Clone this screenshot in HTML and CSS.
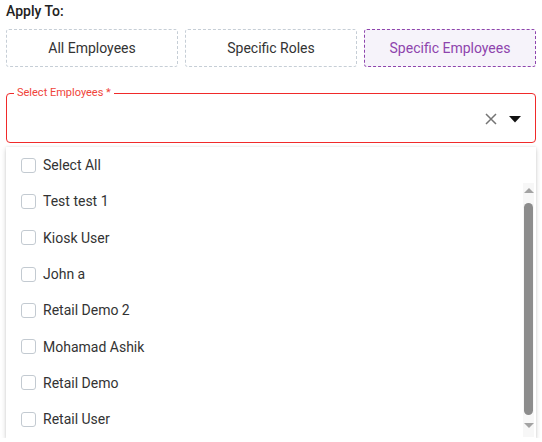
FILE: index.html
```html
<!DOCTYPE html>
<html>
<head>
<meta charset="utf-8">
<link rel="stylesheet" href="styles.css">
</head>
<body>
<div class="wrap">
  <div class="title">Apply To:</div>
  <div class="options">
    <div class="opt">All Employees</div>
    <div class="opt">Specific Roles</div>
    <div class="opt active">Specific Employees</div>
  </div>
  <fieldset class="field">
    <legend class="legend">Select Employees *</legend>
    <div class="field-icons">
      <svg class="clear" width="12" height="12" viewBox="0 0 12 12"><path d="M1 1L11 11M11 1L1 11" stroke="#757575" stroke-width="1.5" fill="none"/></svg>
      <svg class="caret" width="12" height="7" viewBox="0 0 12 7"><path d="M0 0H12L6 6.5Z" fill="#111"/></svg>
    </div>
  </fieldset>
  <div class="menu">
    <div class="row"><span class="cb"></span>Select All</div>
    <div class="list">
      <div class="row"><span class="cb"></span>Test test 1</div>
      <div class="row"><span class="cb"></span>Kiosk User</div>
      <div class="row"><span class="cb"></span>John a</div>
      <div class="row"><span class="cb"></span>Retail Demo 2</div>
      <div class="row"><span class="cb"></span>Mohamad Ashik</div>
      <div class="row"><span class="cb"></span>Retail Demo</div>
      <div class="row"><span class="cb"></span>Retail User</div>
      <div class="scrollbar">
        <span class="arrow up"></span>
        <span class="thumb"></span>
        <span class="arrow down"></span>
      </div>
    </div>
  </div>
</div>
</body>
</html>
```
FILE: styles.css
```css
* { box-sizing: border-box; }
html, body { margin: 0; padding: 0; background: #fff; }
body { font-family: Roboto, "Noto Sans", Arial, sans-serif; color: #333; }
.wrap { padding: 3px 6px 0 6px; width: 542px; }
.title { font-size: 14px; font-weight: 500; color: #222; line-height: 17px; height: 17px; }
.options { display: grid; grid-template-columns: 1fr 1fr 1fr; gap: 7px; margin-top: 9px; }
.opt { height: 38px; border: 1px dashed #c6ced6; border-radius: 3px; display: flex; align-items: center; justify-content: center; font-size: 14px; color: #333; }
.opt.active { border-color: #8e44ad; color: #8e44ad; background: #f6f3fa; }
.field { margin: 20px 0 0 0; padding: 0 14px 0 7px; border: 1px solid #f02a2a; border-radius: 4px; height: 56px; display: flex; min-width: 0; }
.legend { font-size: 11px; color: #f0443a; padding: 0 3px; margin-left: 0; line-height: 12px; }
.field-icons { margin-left: auto; display: flex; align-items: center; gap: 12px; padding-top: 0; height: 40px; }
.menu { margin-top: 4px; height: 291px; background: #fff; box-shadow: 0 2px 5px rgba(0,0,0,0.18), 0 0 2px rgba(0,0,0,0.08); }
.row { height: 36.3px; display: flex; align-items: center; padding-left: 15px; font-size: 14px; color: #333; gap: 7px; }
.cb { width: 15px; height: 15px; border: 1px solid #c3cad1; border-radius: 3px; background: #fff; flex: none; }
.list { position: relative; }
.scrollbar { position: absolute; right: 2px; top: 0; bottom: 0; width: 11px; background: #f7f7f7; display: flex; flex-direction: column; align-items: center; }
.arrow { width: 0; height: 0; border-left: 5px solid transparent; border-right: 5px solid transparent; flex: none; }
.arrow.up { border-bottom: 5px solid #a3a3a3; margin-top: 5px; }
.arrow.down { border-top: 5px solid #a3a3a3; margin-top: 8px; }
.thumb { width: 9px; height: 212px; background: #8c8c8c; border-radius: 5px; margin-top: 10px; flex: none; }
```
